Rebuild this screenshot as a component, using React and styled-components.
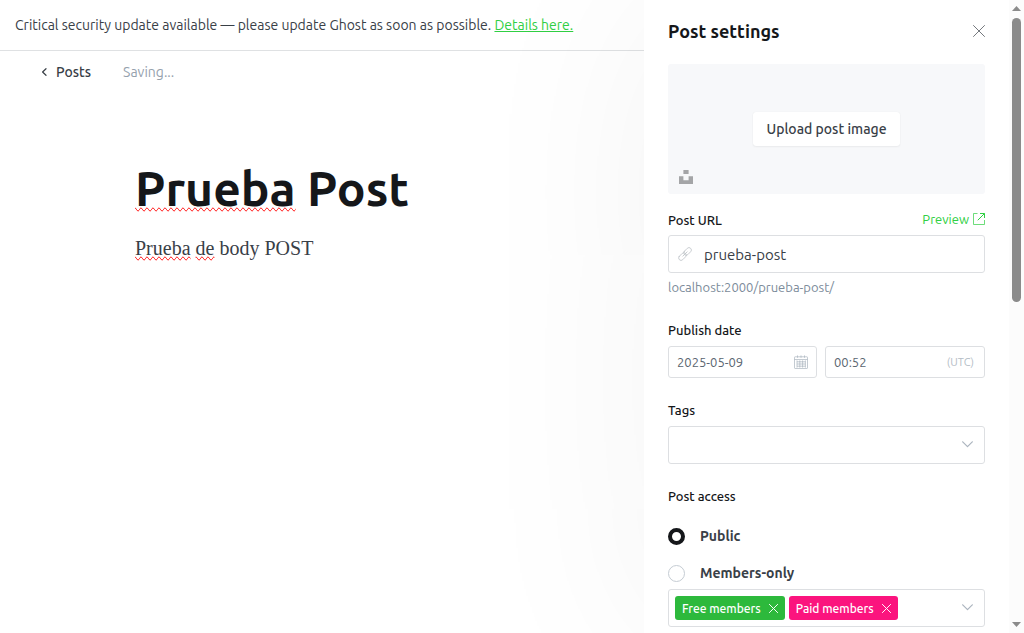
import React, { useState } from "react";
import styled, { createGlobalStyle } from "styled-components";

const GlobalStyle = createGlobalStyle`
  *, *::before, *::after { box-sizing: border-box; }
  body {
    margin: 0;
    background: #fff;
    color: #394047;
    font-family: Ubuntu, "Noto Sans", "Open Sans", sans-serif;
    font-size: 14px;
  }
  button, input, select { font: inherit; color: inherit; }
`;

const Screen = styled.div`
  display: flex;
  height: 100vh;
  overflow: hidden;
`;

const Editor = styled.main`
  flex: 1;
  min-width: 0;
`;

const Alert = styled.div`
  padding: 13px 15px;
  border-bottom: 1px solid #dfe1e3;
  line-height: 24px;
  white-space: nowrap;
`;

const AlertLink = styled.a`
  color: #30cf43;
  text-decoration: underline;
`;

const Toolbar = styled.header`
  display: flex;
  align-items: center;
  gap: 32px;
  height: 42px;
  padding-left: 41px;
`;

const BackLink = styled.a`
  display: flex;
  align-items: center;
  gap: 8px;
  color: #394047;
  font-weight: 500;
  text-decoration: none;
`;

const Status = styled.span`
  color: #95a1ad;
`;

const Canvas = styled.article`
  padding: 63px 24px 24px 135px;
`;

const Title = styled.h1`
  margin: 0;
  color: #15171a;
  font-size: 48px;
  font-weight: 600;
  line-height: 64px;
`;

const Body = styled.p`
  margin: 12px 0 0;
  font-family: "Liberation Serif", Georgia, serif;
  font-size: 20px;
  line-height: 32px;
`;

const Misspelled = styled.span`
  text-decoration-line: spelling-error;
`;

const Panel = styled.aside`
  display: flex;
  flex: 0 0 380px;
  min-width: 0;
  background: #fff;
  box-shadow: 0 0 200px rgba(0, 0, 0, 0.05);
`;

const PanelBody = styled.div`
  flex: 1;
  min-width: 0;
  padding: 0 24px;
  overflow: hidden;
`;

const PanelHeader = styled.div`
  display: flex;
  align-items: center;
  justify-content: space-between;
  height: 62px;
  margin-bottom: 2px;
`;

const PanelTitle = styled.h2`
  margin: 0;
  color: #15171a;
  font-size: 18px;
  font-weight: 600;
`;

const IconButton = styled.button`
  display: flex;
  padding: 0;
  border: 0;
  background: none;
  cursor: pointer;
`;

const Uploader = styled.div`
  position: relative;
  display: flex;
  align-items: center;
  justify-content: center;
  height: 130px;
  border-radius: 3px;
  background: #f7f8fa;
`;

const UploadButton = styled.button`
  height: 34px;
  padding: 0 13px;
  border: 0;
  border-radius: 3px;
  background: #fff;
  box-shadow: 0 0 1px rgba(0, 0, 0, 0.08), 0 1px 2px rgba(0, 0, 0, 0.05);
  font-weight: 500;
  cursor: pointer;
`;

const UnsplashButton = styled(IconButton)`
  position: absolute;
  bottom: 10px;
  left: 11px;
`;

const Field = styled.div`
  margin-top: ${(p) => p.$top}px;
`;

const LabelRow = styled.div`
  display: flex;
  align-items: center;
  justify-content: space-between;
  height: 20px;
  margin-bottom: ${(p) => (p.$tight ? 5 : 6)}px;
`;

const Label = styled.label`
  color: #15171a;
  font-size: 13px;
  font-weight: 500;
`;

const PreviewLink = styled.a`
  display: flex;
  align-items: center;
  gap: 4px;
  height: 18px;
  margin-bottom: 2px;
  color: #30cf43;
  font-size: 13px;
  text-decoration: none;
`;

const InputBox = styled.div`
  display: flex;
  align-items: center;
  height: ${(p) => (p.$small ? 32 : 38)}px;
  padding: 0 ${(p) => (p.$small ? 8 : 9)}px;
  border: 1px solid #dddfe2;
  border-radius: 3px;
  background: #fff;
  color: ${(p) => (p.$small ? "#5a6570" : "#394047")};
  font-size: ${(p) => (p.$small ? 13 : 15)}px;
`;

const TextInput = styled.input`
  flex: 1;
  min-width: 0;
  padding: 0;
  border: 0;
  outline: 0;
  background: none;
`;

const SlugInput = styled(TextInput)`
  margin-left: 12px;
`;

const Hint = styled.p`
  margin: 4px 0 0;
  color: #7c8b9a;
  font-size: 13px;
  line-height: 20px;
`;

const DateRow = styled.div`
  display: grid;
  grid-template-columns: minmax(0, 149fr) minmax(0, 160fr);
  gap: 8px;
`;

const Zone = styled.span`
  margin-right: 2px;
  color: #b4bdc6;
  font-size: 11px;
`;

const SelectBox = styled.div`
  display: grid;
  align-items: center;
  height: 38px;
  border: 1px solid #dddfe2;
  border-radius: 3px;

  > * { grid-area: 1 / 1; }
  > svg { justify-self: end; margin-right: 11px; pointer-events: none; }
`;

const Select = styled.select`
  width: 100%;
  height: 100%;
  padding: 0 32px 0 10px;
  border: 0;
  outline: 0;
  appearance: none;
  background: none;
`;

const TokenList = styled.div`
  display: flex;
  gap: 4px;
  padding: 0 6px;
`;

const Token = styled.span`
  display: flex;
  align-items: center;
  gap: 8px;
  height: 24px;
  padding: 0 7px;
  border-radius: 3px;
  background: ${(p) => p.$color};
  color: #fff;
  font-size: 12px;
  font-weight: 500;
`;

const AccessGroup = styled.fieldset`
  min-width: 0;
  margin: 22px 0 0;
  padding: 0;
  border: 0;
`;

const Legend = styled.legend`
  height: 20px;
  padding: 0;
  color: #15171a;
  font-size: 13px;
  font-weight: 500;
  line-height: 20px;
`;

const Option = styled.label`
  display: flex;
  align-items: center;
  gap: 15px;
  height: 37px;
  font-size: 14px;
  font-weight: 600;
`;

const OptionText = styled.span`
  padding-bottom: 2px;
`;

const OptionList = styled.div`
  padding-top: 12px;
  margin-bottom: -3px;
`;

const Radio = styled.input`
  width: 17px;
  height: 17px;
  margin: 0;
  border: 1px solid #c5ccd3;
  border-radius: 50%;
  appearance: none;
  background: #fff;

  &:checked { border: 4px solid #15171a; }
`;

const Scrollbar = styled.div`
  display: flex;
  flex: 0 0 15px;
  flex-direction: column;
  align-items: center;
  padding: 6px 0;
  background: #fcfcfc;
`;

const Track = styled.div`
  flex: 1;
  width: 9px;
  margin: 7px 0;
`;

const Thumb = styled.div`
  height: 47.5%;
  border-radius: 5px;
  background: #8b8b8b;
`;

const ScrollArrow = ({ down }) => (
  <svg width="9" height="5" viewBox="0 0 9 5" aria-hidden="true">
    <path d={down ? "M0 0h9L4.5 5z" : "M0 5h9L4.5 0z"} fill="#8b8b8b" />
  </svg>
);

const Cross = ({ size, color }) => (
  <svg width={size} height={size} viewBox="0 0 12 12" fill="none" stroke={color} aria-hidden="true">
    <path d="M.5.5l11 11M11.5.5l-11 11" strokeWidth={size > 10 ? 0.8 : 1.3} strokeLinecap="round" />
  </svg>
);

const ChevronDown = () => (
  <svg width="11" height="8" viewBox="0 0 11 8" fill="none" stroke="#abb4be" strokeWidth="1.2" aria-hidden="true">
    <path d="M.7.8l4.8 4.9L10.3.8" strokeLinecap="round" strokeLinejoin="round" />
  </svg>
);

const ChevronLeft = () => (
  <svg width="7" height="8" viewBox="0 0 7 8" fill="none" stroke="#394047" strokeWidth="1.2" aria-hidden="true">
    <path d="M5 .7L1.6 4 5 7.3" strokeLinecap="round" strokeLinejoin="round" />
  </svg>
);

const UnsplashIcon = () => (
  <svg width="14" height="14" viewBox="0 0 14 14" fill="#a4a5a7" aria-hidden="true">
    <path d="M4.4 0h5.2v4H4.4zM0 6.2h4.4v4h5.2v-4H14V14H0z" />
  </svg>
);

const ExternalIcon = () => (
  <svg width="12" height="12" viewBox="0 0 12 12" fill="none" stroke="#30cf43" aria-hidden="true">
    <path d="M4.5.5h-4v11h11V7" strokeOpacity=".7" />
    <path d="M7.4.5h4.1v4.1M11.2.8L5 7" strokeLinecap="round" strokeLinejoin="round" />
  </svg>
);

const LinkIcon = () => (
  <svg width="14" height="14" viewBox="0 0 14 14" fill="none" stroke="#bfc4c9" strokeWidth=".8" aria-hidden="true">
    <g transform="rotate(-45 7 7)" strokeLinecap="round">
      <rect x="-1" y="4.6" width="8.8" height="4.8" rx="2.4" />
      <rect x="6.2" y="4.6" width="8.8" height="4.8" rx="2.4" />
      <path d="M4 7h6" />
    </g>
  </svg>
);

const CalendarIcon = () => (
  <svg width="14" height="14" viewBox="0 0 14 14" fill="none" stroke="#abb4be" strokeWidth=".7" aria-hidden="true">
    <rect x=".5" y="1.8" width="13" height="11.7" rx=".6" />
    <path d="M.5 4.5h13M3 6.8h8.4M3 9h8.4M3 11.2h8.4M3 5.4v7.2M5.8 5.4v7.2M8.6 5.4v7.2M11.4 5.4v7.2M3.5.4v2.4M7 .4v2.4M10.5.4v2.4" />
  </svg>
);

const initialTiers = [
  { name: "Free members", color: "#2db93c" },
  { name: "Paid members", color: "#fb147e" },
];

export default function App() {
  const [access, setAccess] = useState("public");
  const [tiers, setTiers] = useState(initialTiers);

  return (
    <>
      <GlobalStyle />
      <Screen>
        <Editor>
          <Alert role="alert">
            Critical security update available — please update Ghost as soon as possible.{" "}
            <AlertLink href="#details">Details here.</AlertLink>
          </Alert>
          <Toolbar>
            <BackLink href="#posts"><ChevronLeft />Posts</BackLink>
            <Status>Saving...</Status>
          </Toolbar>
          <Canvas>
            <Title><Misspelled>Prueba</Misspelled> Post</Title>
            <Body><Misspelled>Prueba</Misspelled> <Misspelled>de</Misspelled> body POST</Body>
          </Canvas>
        </Editor>

        <Panel>
          <PanelBody>
            <PanelHeader>
              <PanelTitle>Post settings</PanelTitle>
              <IconButton aria-label="Close"><Cross size={12} color="#50565c" /></IconButton>
            </PanelHeader>

            <Uploader>
              <UploadButton>Upload post image</UploadButton>
              <UnsplashButton aria-label="Choose from Unsplash"><UnsplashIcon /></UnsplashButton>
            </Uploader>

            <Field $top={16}>
              <LabelRow $tight>
                <Label htmlFor="slug">Post URL</Label>
                <PreviewLink href="#preview">Preview<ExternalIcon /></PreviewLink>
              </LabelRow>
              <InputBox>
                <LinkIcon />
                <SlugInput id="slug" defaultValue="prueba-post" />
              </InputBox>
              <Hint>localhost:2000/prueba-post/</Hint>
            </Field>

            <Field $top={23}>
              <LabelRow><Label htmlFor="date">Publish date</Label></LabelRow>
              <DateRow>
                <InputBox $small>
                  <TextInput id="date" defaultValue="2025-05-09" />
                  <CalendarIcon />
                </InputBox>
                <InputBox $small>
                  <TextInput aria-label="Publish time" defaultValue="00:52" />
                  <Zone>(UTC)</Zone>
                </InputBox>
              </DateRow>
            </Field>

            <Field $top={22}>
              <LabelRow><Label htmlFor="tags">Tags</Label></LabelRow>
              <SelectBox>
                <Select id="tags" defaultValue=""><option value="" /></Select>
                <ChevronDown />
              </SelectBox>
            </Field>

            <AccessGroup>
              <Legend>Post access</Legend>
              <OptionList>
                <Option>
                  <Radio type="radio" name="access" checked={access === "public"} onChange={() => setAccess("public")} />
                  <OptionText>Public</OptionText>
                </Option>
                <Option>
                  <Radio type="radio" name="access" checked={access === "members"} onChange={() => setAccess("members")} />
                  <OptionText>Members-only</OptionText>
                </Option>
              </OptionList>
              <SelectBox>
                <TokenList>
                  {tiers.map((tier) => (
                    <Token key={tier.name} $color={tier.color}>
                      {tier.name}
                      <IconButton
                        aria-label={`Remove ${tier.name}`}
                        onClick={() => setTiers(tiers.filter((t) => t !== tier))}
                      >
                        <Cross size={9} color="#fff" />
                      </IconButton>
                    </Token>
                  ))}
                </TokenList>
                <ChevronDown />
              </SelectBox>
            </AccessGroup>
          </PanelBody>
          <Scrollbar aria-hidden="true">
            <ScrollArrow />
            <Track><Thumb /></Track>
            <ScrollArrow down />
          </Scrollbar>
        </Panel>
      </Screen>
    </>
  );
}
